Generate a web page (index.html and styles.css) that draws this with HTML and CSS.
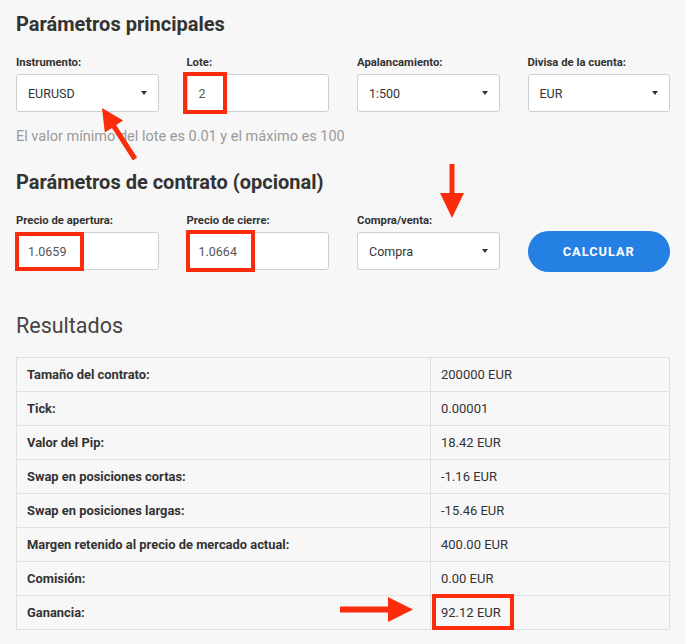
FILE: index.html
```html
<!DOCTYPE html>
<html lang="es">
<head>
<meta charset="utf-8">
<title>Calculadora</title>
<link rel="stylesheet" href="styles.css">
</head>
<body>
<div class="page">
  <h2 class="title">Parámetros principales</h2>
  <div class="grid">
    <div class="field">
      <label class="label">Instrumento:</label>
      <div class="control select"><span>EURUSD</span><span class="caret"></span></div>
    </div>
    <div class="field">
      <label class="label">Lote:</label>
      <div class="control input"><span>2</span><span class="mark mark-lote"></span></div>
    </div>
    <div class="field">
      <label class="label">Apalancamiento:</label>
      <div class="control select"><span>1:500</span><span class="caret"></span></div>
    </div>
    <div class="field">
      <label class="label">Divisa de la cuenta:</label>
      <div class="control select"><span>EUR</span><span class="caret"></span></div>
    </div>
  </div>
  <p class="hint">El valor mínimo del lote es 0.01 y el máximo es 100</p>

  <h2 class="title title-2">Parámetros de contrato (opcional)</h2>
  <div class="grid">
    <div class="field">
      <label class="label">Precio de apertura:</label>
      <div class="control input"><span>1.0659</span><span class="mark mark-open"></span></div>
    </div>
    <div class="field">
      <label class="label">Precio de cierre:</label>
      <div class="control input"><span>1.0664</span><span class="mark mark-close"></span></div>
    </div>
    <div class="field">
      <label class="label">Compra/venta:</label>
      <div class="control select"><span>Compra</span><span class="caret"></span></div>
    </div>
    <div class="field field-btn">
      <button class="btn">CALCULAR</button>
    </div>
  </div>

  <h2 class="results-title">Resultados</h2>
  <table class="results">
    <tr><td class="k">Tamaño del contrato:</td><td class="v">200000 EUR</td></tr>
    <tr><td class="k">Tick:</td><td class="v">0.00001</td></tr>
    <tr><td class="k">Valor del Pip:</td><td class="v">18.42 EUR</td></tr>
    <tr><td class="k">Swap en posiciones cortas:</td><td class="v">-1.16 EUR</td></tr>
    <tr><td class="k">Swap en posiciones largas:</td><td class="v">-15.46 EUR</td></tr>
    <tr><td class="k">Margen retenido al precio de mercado actual:</td><td class="v">400.00 EUR</td></tr>
    <tr><td class="k">Comisión:</td><td class="v">0.00 EUR</td></tr>
    <tr><td class="k">Ganancia:</td><td class="v v-mark">92.12 EUR<span class="mark mark-profit"></span></td></tr>
  </table>

  <svg class="arrows" width="686" height="644" viewBox="0 0 686 644" aria-hidden="true">
    <g fill="#fa2c0c">
      <polygon points="137.1,157.6 132.9,160.4 111.9,127.9 104.8,132.5 102,108 123.2,120.5 116.1,125.1"/>
      <polygon points="449.5,164 454.5,164 454.5,193 464,193 452,218 440,193 449.5,193"/>
      <polygon points="340,606.5 388,606.5 388,597 413,609.5 388,622 388,612.5 340,612.5"/>
    </g>
  </svg>
</div>
</body>
</html>
```

FILE: styles.css
```css
* { box-sizing: border-box; }

html, body {
  margin: 0;
  padding: 0;
  background: #f7f7f7;
}

body {
  font-family: Roboto, "Liberation Sans", Arial, sans-serif;
  color: #333;
}

.page {
  position: relative;
  width: 686px;
  height: 644px;
  padding: 12px 16px 0;
  overflow: hidden;
}

.title {
  margin: 0;
  font-size: 20px;
  line-height: 24px;
  font-weight: 700;
  color: #333;
}

.title-2 {
  margin-top: 24px;
}

.grid {
  display: grid;
  grid-template-columns: repeat(4, 1fr);
  column-gap: 28px;
  margin-top: 20px;
  align-items: start;
}

.field {
  display: flex;
  flex-direction: column;
}

.label {
  display: block;
  font-size: 11.3px;
  line-height: 14px;
  font-weight: 700;
  color: #333;
  margin-bottom: 4px;
}

.control {
  position: relative;
  height: 38px;
  background: #fff;
  border: 1px solid #cfcfcf;
  border-radius: 3px;
  padding: 0 11px;
  display: flex;
  align-items: center;
  justify-content: space-between;
  font-size: 12.5px;
}

.select {
  color: #333;
}

.input {
  color: #555;
}

.caret {
  width: 0;
  height: 0;
  border-left: 3.5px solid transparent;
  border-right: 3.5px solid transparent;
  border-top: 4px solid #333;
}

.mark {
  position: absolute;
  border: 4px solid #fa2c0c;
  pointer-events: none;
}

.mark-lote {
  left: -5px;
  top: -3px;
  width: 44px;
  height: 42px;
}

.mark-open {
  left: -2px;
  top: -1px;
  width: 69px;
  height: 39px;
}

.mark-close {
  left: -2px;
  top: -3px;
  width: 69px;
  height: 42px;
}

.hint {
  margin: 16px 0 0;
  font-size: 14.5px;
  line-height: 18px;
  color: #9a9a9a;
}

.field-btn {
  padding-top: 17px;
}

.btn {
  height: 41px;
  width: 100%;
  border: none;
  border-radius: 21px;
  background: #2580e3;
  color: #fff;
  font-family: Roboto, "Liberation Sans", Arial, sans-serif;
  font-size: 12.8px;
  font-weight: 700;
  letter-spacing: 1px;
  padding: 0;
}

.results-title {
  margin: 42px 0 0;
  font-size: 21.5px;
  line-height: 24px;
  font-weight: 400;
  color: #444;
}

.results {
  margin-top: 19px;
  width: 654px;
  border-collapse: collapse;
  border: 1px solid #e0e0e0;
}

.results td {
  height: 34px;
  padding: 0 10px;
  border: 1px solid #e0e0e0;
  line-height: 16px;
}

.results .k {
  width: 414px;
  font-size: 12.9px;
  font-weight: 700;
  color: #333;
}

.results .v {
  font-size: 13px;
  color: #333;
}

.v-mark {
  position: relative;
}

.mark-profit {
  left: 1px;
  top: -2px;
  width: 82px;
  height: 36px;
}

.arrows {
  position: absolute;
  left: 0;
  top: 0;
  pointer-events: none;
}
```
